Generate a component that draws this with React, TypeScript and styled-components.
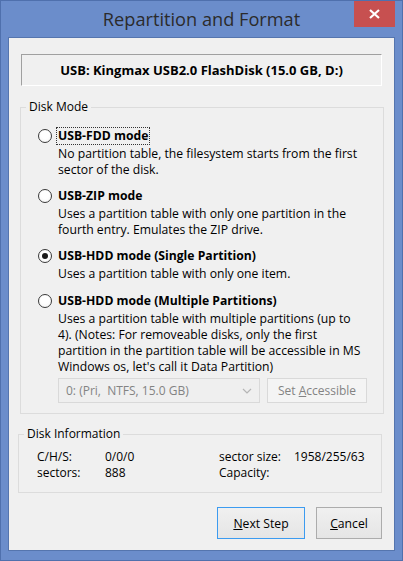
import styled, { createGlobalStyle } from "styled-components";

const GlobalStyle = createGlobalStyle`
  html, body {
    margin: 0;
    padding: 0;
    background: #6b8dcb;
  }
  * {
    box-sizing: border-box;
  }
`;

const Window = styled.div`
  width: 403px;
  height: 561px;
  background: #6b8dcb;
  border: 1px solid #4f70ad;
  display: flex;
  flex-direction: column;
  font-family: "Open Sans", "Noto Sans", sans-serif;
  font-size: 12px;
  color: #000;
`;

const TitleBar = styled.div`
  position: relative;
  height: 36px;
  display: flex;
  align-items: center;
  justify-content: center;
`;

const Title = styled.div`
  font-size: 18.2px;
  color: #2b2b2b;
  margin-top: -1px;
`;

const CloseButton = styled.div`
  position: absolute;
  top: 0;
  right: 7px;
  width: 41px;
  height: 26px;
  background: #c75050;
  display: flex;
  align-items: center;
  justify-content: center;
`;

const Client = styled.div`
  flex: 1;
  margin: 0 7px 9px 7px;
  background: #f0f0f0;
  border: 1px solid #5575ae;
  padding: 16px 10px 11px 11px;
  display: flex;
  flex-direction: column;
`;

const DeviceBox = styled.div`
  height: 32px;
  margin: 0 2px 0 1px;
  border-top: 1px solid #a0a0a0;
  border-left: 1px solid #a0a0a0;
  border-bottom: 1px solid #fff;
  border-right: 1px solid #fff;
  display: flex;
  align-items: center;
  justify-content: center;
  font-weight: 700;
  font-size: 13px;
`;

const Group = styled.fieldset<{ $top: number; $shift?: number }>`
  margin: ${(p) => p.$top}px ${(p) => (p.$shift ? -p.$shift : 0)}px 0
    ${(p) => (p.$shift ? p.$shift : 0)}px;
  padding: 0;
  border: 1px solid #dcdcdc;
  min-width: 0;
`;

const Legend = styled.legend`
  margin-left: 5px;
  padding: 0 3px;
  line-height: 16px;
  font-size: 12px;
`;

const Options = styled.div`
  padding: 13px 12px 10px 17px;
  display: flex;
  flex-direction: column;
  gap: 10px;
`;

const Option = styled.div<{ $extra?: number }>`
  display: flex;
  flex-direction: column;
  gap: 2px;
  margin-top: ${(p) => p.$extra ?? 0}px;
`;

const OptionHead = styled.div`
  display: flex;
  align-items: center;
  gap: 5px;
  height: 16px;
`;

const Radio = styled.span<{ $checked?: boolean }>`
  width: 14px;
  height: 14px;
  border-radius: 50%;
  border: 1px solid #3a3a3a;
  background: radial-gradient(circle at 50% 40%, #ffffff 40%, #f2f2f2 100%);
  display: flex;
  align-items: center;
  justify-content: center;
  flex: none;
  &::after {
    content: "";
    width: 6px;
    height: 6px;
    border-radius: 50%;
    background: ${(p) => (p.$checked ? "#1a1a1a" : "transparent")};
  }
`;

const OptionLabel = styled.span<{ $focused?: boolean }>`
  font-weight: 700;
  font-size: 12.2px;
  line-height: 16px;
  padding: 0 1px;
  outline: ${(p) => (p.$focused ? "1px dotted #333" : "none")};
`;

const Desc = styled.div`
  padding-left: 20px;
  line-height: 16px;
  font-size: 12.2px;
  white-space: nowrap;
`;

const PartRow = styled.div`
  display: flex;
  gap: 7px;
  padding-left: 20px;
  margin-top: -7px;
`;

const Select = styled.div`
  width: 202px;
  height: 25px;
  border: 1px solid #d9d9d9;
  background: #efefef;
  color: #838383;
  display: flex;
  align-items: center;
  justify-content: space-between;
  padding: 0 7px 0 7px;
  white-space: pre;
`;

const DisabledButton = styled.div`
  width: 100px;
  height: 25px;
  border: 1px solid #d9d9d9;
  background: #f4f4f4;
  color: #838383;
  display: flex;
  align-items: center;
  justify-content: center;
  u {
    text-decoration: underline;
  }
`;

const InfoGrid = styled.div`
  display: grid;
  grid-template-columns: 68px 114px 75px auto;
  padding: 7px 0 11px 18px;
  line-height: 16px;
`;

const Footer = styled.div`
  margin-top: auto;
  margin-right: 2px;
  display: flex;
  justify-content: flex-end;
  gap: 11px;
`;

const Button = styled.div<{ $default?: boolean }>`
  height: 32px;
  width: ${(p) => (p.$default ? "88px" : "66px")};
  border: 1px solid ${(p) => (p.$default ? "#3c9bf0" : "#acacac")};
  background: linear-gradient(#f0f0f0, #e5e5e5);
  display: flex;
  align-items: center;
  justify-content: center;
  font-size: 12.2px;
`;

const Chevron = () => (
  <svg width="10" height="6" viewBox="0 0 10 6">
    <path d="M1 1 L5 5 L9 1" fill="none" stroke="#b5b5b5" strokeWidth="1.2" />
  </svg>
);

const CloseGlyph = () => (
  <svg width="11" height="10" viewBox="0 0 11 10">
    <path d="M1 1 L10 9 M10 1 L1 9" stroke="#fff" strokeWidth="2.2" />
  </svg>
);

const App = () => {
  return (
    <Window>
      <GlobalStyle />
      <TitleBar>
        <Title>Repartition and Format</Title>
        <CloseButton>
          <CloseGlyph />
        </CloseButton>
      </TitleBar>
      <Client>
        <DeviceBox>USB: Kingmax USB2.0 FlashDisk (15.0 GB, D:)</DeviceBox>

        <Group $top={13}>
          <Legend>Disk Mode</Legend>
          <Options>
            <Option>
              <OptionHead>
                <Radio />
                <OptionLabel $focused>USB-FDD mode</OptionLabel>
              </OptionHead>
              <Desc>
                No partition table, the filesystem starts from the first
                <br />
                sector of the disk.
              </Desc>
            </Option>
            <Option>
              <OptionHead>
                <Radio />
                <OptionLabel>USB-ZIP mode</OptionLabel>
              </OptionHead>
              <Desc>
                Uses a partition table with only one partition in the
                <br />
                fourth entry. Emulates the ZIP drive.
              </Desc>
            </Option>
            <Option>
              <OptionHead>
                <Radio $checked />
                <OptionLabel>USB-HDD mode (Single Partition)</OptionLabel>
              </OptionHead>
              <Desc>Uses a partition table with only one item.</Desc>
            </Option>
            <Option $extra={1}>
              <OptionHead>
                <Radio />
                <OptionLabel>USB-HDD mode (Multiple Partitions)</OptionLabel>
              </OptionHead>
              <Desc>
                Uses a partition table with multiple partitions (up to
                <br />
                4). (Notes: For removeable disks, only the first
                <br />
                partition in the partition table will be accessible in MS
                <br />
                Windows os, let's call it Data Partition)
              </Desc>
            </Option>
            <PartRow>
              <Select>
                {"0: (Pri,  NTFS, 15.0 GB)"}
                <Chevron />
              </Select>
              <DisabledButton>
                Set&nbsp;<u>A</u>ccessible
              </DisabledButton>
            </PartRow>
          </Options>
        </Group>

        <Group $top={12} $shift={-2}>
          <Legend>Disk Information</Legend>
          <InfoGrid>
            <span>C/H/S:</span>
            <span>0/0/0</span>
            <span>sector size:</span>
            <span>1958/255/63</span>
            <span>sectors:</span>
            <span>888</span>
            <span>Capacity:</span>
            <span></span>
          </InfoGrid>
        </Group>

        <Footer>
          <Button $default>
            <u>N</u>ext Step
          </Button>
          <Button>
            <u>C</u>ancel
          </Button>
        </Footer>
      </Client>
    </Window>
  );
};

export default App;
